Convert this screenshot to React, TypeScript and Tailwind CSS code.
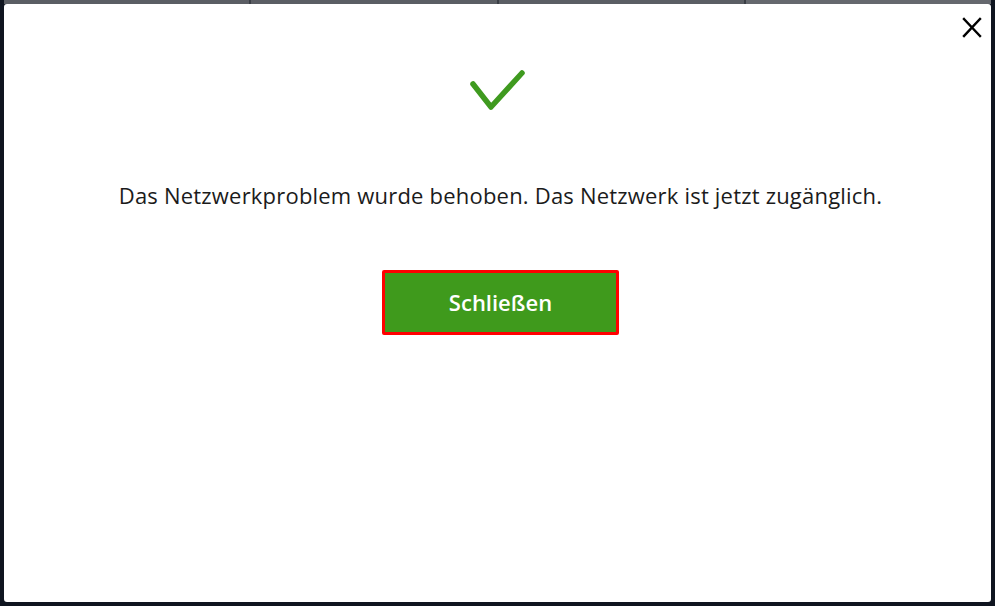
export default function App() {
  return (
    <div className="w-[995px] h-[606px] bg-[#0f1520] px-[4px] pb-[4px] flex flex-col" style={{ fontFamily: '"Open Sans", "Noto Sans", sans-serif' }}>
      {/* background tabs peeking above the dialog */}
      <div className="h-[4px] flex gap-[2px] bg-[#3a3e45]">
        <div className="flex-1 bg-[#5b5e64]" />
        <div className="flex-1 bg-[#5b5e64]" />
        <div className="flex-1 bg-[#5b5e64]" />
        <div className="flex-1 bg-[#65686e]" />
      </div>

      <div className="relative flex-1 bg-white rounded-[3px] flex flex-col items-center">
        <button className="absolute top-[10px] right-[6px] p-[2px] text-black">
          <svg width="22" height="22" viewBox="0 0 22 22" fill="none" stroke="currentColor" strokeWidth="2.4" strokeLinecap="square">
            <path d="M3 3 L19 20 M19 3 L3 20" />
          </svg>
        </button>

        <svg className="mt-[62px] -ml-[2px]" width="60" height="47" viewBox="0 0 60 47" fill="none" stroke="#3f9a1f" strokeWidth="5.5" strokeLinecap="round" strokeLinejoin="round">
          <path d="M6 18 L24 41 L55 7" />
        </svg>

        <p className="mt-[68px] ml-[6px] text-[22px] tracking-[0.2px] leading-[28px] text-[#1b1b1b]">
          Das Netzwerkproblem wurde behoben. Das Netzwerk ist jetzt zugänglich.
        </p>

        <button className="mt-[61px] ml-[6px] w-[237px] h-[65px] bg-[#3f9a1c] border-[3px] border-[#ff0000] rounded-[2px] text-white text-[22px] font-semibold">
          Schließen
        </button>
      </div>
    </div>
  );
}
